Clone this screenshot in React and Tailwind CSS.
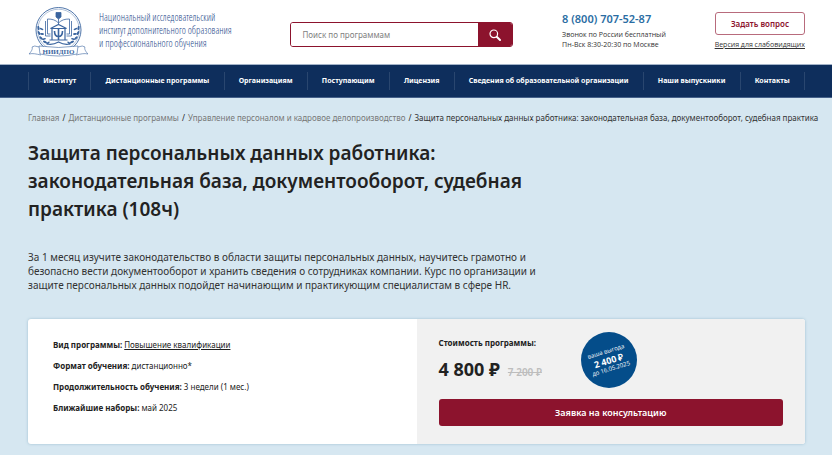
const navItems = [
  "Институт",
  "Дистанционные программы",
  "Организациям",
  "Поступающим",
  "Лицензия",
  "Сведения об образовательной организации",
  "Наши выпускники",
  "Контакты",
];

const crumbs = ["Главная", "Дистанционные программы", "Управление персоналом и кадровое делопроизводство"];

const leaves = [
  [33.5, 28, 80], [34, 33, 65], [36, 38, 45], [40, 42, 25],
];

function Emblem() {
  return (
    <svg viewBox="24 2 70 58" className="h-[58px] w-[70px] shrink-0" fill="none" stroke="#3b659f" strokeWidth="0.8" aria-hidden="true">
      <circle cx="58.500" cy="30" r="22.500" strokeWidth="0.9" />
      <circle cx="58.500" cy="30" r="20.800" strokeWidth="0.4" />
      <path d="M56 12.500h5v4.500l-2.500 2-2.500-2z" fill="#3b659f" />
      <path d="M58.500 19v5M58.500 23c-3-3-6-4-11-4v15h3M58.500 23c3-3 6-4 11-4v15h-3M45.500 21v15h5M71.500 21v15h-5" />
      <path d="M50.500 28.500l8-4 8 4zM49.500 40h18M52 29v11M65 29v11" strokeWidth="1.200" />
      <path d="M54.500 31c0 4 1 5.500 4 5.500s4-1.500 4-5.500M58.500 29v11" strokeWidth="1.600" />
      <g fill="#3b659f" stroke="none">
        {leaves.map(([x, y, a]) => (
          <g key={y}>
            <ellipse cx={x + 5} cy={y} rx="2.200" ry="1" transform={`rotate(${a} ${x + 5} ${y})`} />
            <ellipse cx={x + 8} cy={y + 1} rx="2" ry="0.900" transform={`rotate(${a - 60} ${x + 8} ${y + 1})`} />
            <ellipse cx={112 - x} cy={y} rx="2.200" ry="1" transform={`rotate(${-a} ${112 - x} ${y})`} />
            <ellipse cx={109 - x} cy={y + 1} rx="2" ry="0.900" transform={`rotate(${60 - a} ${109 - x} ${y + 1})`} />
          </g>
        ))}
      </g>
      <path d="M47 44c4 1 8 0 11.500-2 3.500 2 7.500 3 11.500 2" strokeWidth="1.200" />
      <path d="M39 47q-5-2-7 0c1 2-1 5-3 7 4-1 7 0 12 1M78 47q5-2 7 0c-1 2 1 5 3 7-4-1-7 0-12 1" fill="#fff" strokeWidth="0.600" />
      <path d="M39 46q19.500 3 39 0l-1 8q-18.500 4-37 0z" fill="#fff" strokeWidth="0.600" />
      <text x="58.500" y="53.500" textAnchor="middle" fill="#3b659f" stroke="none" fontSize="7" fontWeight="700" fontFamily="Liberation Serif, serif">НИИДПО</text>
    </svg>
  );
}

export default function App() {
  return (
    <div className="min-h-screen bg-[#d6e7f1] font-['Noto_Sans','Open_Sans',sans-serif] text-[#222]">
      <header className="flex h-[65px] items-start justify-between border-b border-[#a3b3c8] bg-white pr-[27px] pl-6 font-['Open_Sans',sans-serif]">
        <a href="#" className="flex items-start pt-0.5 pr-2.5 text-[#1f4a8a]">
          <Emblem />
          <span className="pt-[9px] pl-[5px] font-['Open_Sans_Condensed_Light','Roboto_Condensed','Open_Sans_Condensed',Roboto,sans-serif] text-[10px] leading-[13px] whitespace-nowrap">
            Национальный исследовательский<br />институт дополнительного образования<br />и профессионального обучения
          </span>
        </a>
        <form className="mt-[22px] flex h-[25px] w-[223px] overflow-hidden rounded-[3px] border border-[#8c132d]" onSubmit={(e) => e.preventDefault()}>
          <input aria-label="Поиск по программам" placeholder="Поиск по программам" className="min-w-0 flex-1 bg-white px-[11px] font-['Noto_Sans',sans-serif] text-[8px] outline-none placeholder:text-[#808080]" />
          <button aria-label="Найти" className="flex w-[34px] items-center justify-center bg-[#8c132d] text-white">
            <svg viewBox="0 0 12 12" className="size-3" fill="none" stroke="currentColor" strokeLinecap="round">
              <circle cx="4.800" cy="4.800" r="3.800" strokeWidth="1.200" />
              <path d="M8 8l3 3" strokeWidth="2" />
            </svg>
          </button>
        </form>
        <div className="pt-3 text-[7px] leading-[10px] text-[#333]">
          <a href="tel:88007075287" className="mb-1 block font-['Noto_Sans',sans-serif] text-[11px] leading-[14px] font-semibold text-[#2a6da3]">8 (800) 707-52-87</a>
          <p>Звонок по России бесплатный</p>
          <p>Пн-Вск 8:30-20:30 по Москве</p>
        </div>
        <div className="flex flex-col items-end pt-3">
          <button className="h-[23px] w-[90px] rounded-[3px] border border-[#b86b7c] font-['Noto_Sans',sans-serif] text-[8px] font-semibold text-[#8c132d]">Задать вопрос</button>
          <a href="#" className="mt-1 text-[7px] leading-[11px] text-[#333] underline">Версия для слабовидящих</a>
        </div>
      </header>

      <nav className="flex h-[33px] items-center border-b border-[#45618a] bg-[#0e2e5c] pr-[27px] pl-7">
        <ul className="flex h-[18px] flex-1 border-r border-[#29466f]">
          {navItems.map((item) => (
            <li key={item} className="flex flex-auto items-center justify-center border-l border-[#29466f]">
              <a href="#" className="text-[7px] leading-[10px] font-bold whitespace-nowrap text-white">{item}</a>
            </li>
          ))}
        </ul>
      </nav>

      <main className="pr-[27px] pb-2.5 pl-7">
        <ol className="flex gap-[3px] pt-[14px] text-[8px] leading-3 whitespace-nowrap">
          {crumbs.map((crumb) => (
            <li key={crumb} className="flex gap-[3px]">
              <a href="#" className="text-[#777]">{crumb}</a>
              <span>/</span>
            </li>
          ))}
          <li className="text-[#333]">Защита персональных данных работника: законодательная база, документооборот, судебная практика</li>
        </ol>

        <h1 className="max-w-[520px] pt-[15px] text-[19px] leading-7 font-semibold">
          Защита персональных данных работника: законодательная база, документооборот, судебная практика (108ч)
        </h1>
        <p className="max-w-[520px] pt-[27px] text-[10px] leading-[14px] text-[#333]">
          За 1 месяц изучите законодательство в области защиты персональных данных, научитесь грамотно и безопасно вести документооборот и хранить сведения о сотрудниках компании. Курс по организации и защите персональных данных подойдет начинающим и практикующим специалистам в сфере HR.
        </p>

        <section className="mt-[27px] grid grid-cols-2 overflow-hidden rounded-[3px] bg-white shadow-[0_0_3px_#9dbdd0]">
          <dl className="flex flex-col gap-[9px] px-[25px] pt-5 text-[8px] leading-3">
            <div className="flex gap-0.5"><dt className="font-bold">Вид программы:</dt><dd><a href="#" className="underline">Повышение квалификации</a></dd></div>
            <div className="flex gap-0.5"><dt className="font-bold">Формат обучения:</dt><dd>дистанционно*</dd></div>
            <div className="flex gap-0.5"><dt className="font-bold">Продолжительность обучения:</dt><dd>3 недели (1 мес.)</dd></div>
            <div className="flex gap-0.5"><dt className="font-bold">Ближайшие наборы:</dt><dd>май 2025</dd></div>
          </dl>
          <div className="bg-[#f1f1f1] px-[22px] pt-[13px] pb-[18px]">
            <div className="flex items-start gap-[39px]">
              <div className="pt-[5px]">
                <p className="text-[8px] leading-3 font-bold">Стоимость программы:</p>
                <p className="mt-2 flex items-baseline gap-2 leading-6">
                  <strong className="text-[18px] font-bold">4 800 ₽</strong>
                  <s className="text-[10px] font-semibold text-[#bdbdbd]">7 200 ₽</s>
                </p>
              </div>
              <div className="flex size-14 items-center justify-center rounded-full bg-[#044d8a] text-white">
                <div className="flex -rotate-[17deg] flex-col items-center font-['Open_Sans',sans-serif] text-[6px] leading-[9px] whitespace-nowrap">
                  <span>ваша выгода</span>
                  <strong className="text-[9px]">2 400 ₽</strong>
                  <span>до 16.05.2025</span>
                </div>
              </div>
            </div>
            <button className="mt-[11px] h-[27px] w-full rounded-[3px] bg-[#8c132d] text-[9px] font-semibold text-white">Заявка на консультацию</button>
          </div>
        </section>
      </main>
    </div>
  );
}
